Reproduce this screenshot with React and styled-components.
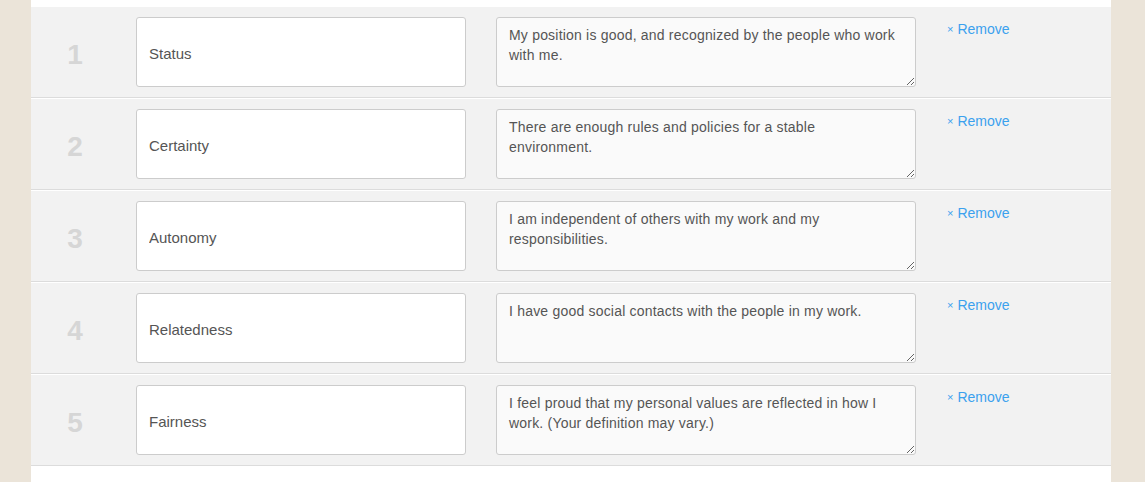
import styled, { createGlobalStyle } from "styled-components";

const GlobalStyle = createGlobalStyle`
  * {
    box-sizing: border-box;
  }
  body {
    margin: 0;
    background: #ebe4d9;
    font-family: "Liberation Sans", Arial, sans-serif;
  }
`;

const Page = styled.div`
  padding: 0 34px 0 31px;
`;

const Panel = styled.div`
  background: #ffffff;
  padding: 6px 0 17px;
`;

const Row = styled.div`
  display: flex;
  align-items: flex-start;
  padding: 10px 0;
  background: #f2f2f2;
  border-top: 1px solid #ffffff;
  border-bottom: 1px solid #dcdcdc;
`;

const Num = styled.div`
  width: 88px;
  margin-right: 17px;
  align-self: center;
  text-align: center;
  font-size: 28px;
  font-weight: bold;
  color: #d6d6d6;
  line-height: 1;
  padding-top: 5px;
`;

const Input = styled.input`
  width: 330px;
  height: 70px;
  padding: 2px 12px 0;
  border: 1px solid #cccccc;
  border-radius: 3px;
  background: #ffffff;
  font-family: inherit;
  font-size: 15px;
  color: #555555;
  outline: none;
`;

const TextArea = styled.textarea`
  width: 420px;
  height: 70px;
  margin-left: 30px;
  padding: 7px 18px 7px 12px;
  border: 1px solid #cccccc;
  border-radius: 3px;
  background: #fafafa;
  font-family: inherit;
  font-size: 14px;
  letter-spacing: 0.2px;
  line-height: 20px;
  color: #555555;
  outline: none;
  resize: vertical;
`;

const Remove = styled.a`
  margin-left: 31px;
  padding-top: 4px;
  color: #3ba1ee;
  font-size: 14px;
  text-decoration: none;
  cursor: pointer;
  display: flex;
  align-items: center;
  gap: 4px;
`;

const Times = styled.span`
  font-size: 11px;
`;

const needs = [
  ["Status", "My position is good, and recognized by the people who work with me."],
  ["Certainty", "There are enough rules and policies for a stable environment."],
  ["Autonomy", "I am independent of others with my work and my responsibilities."],
  ["Relatedness", "I have good social contacts with the people in my work."],
  ["Fairness", "I feel proud that my personal values are reflected in how I work. (Your definition may vary.)"],
];

export default function App() {
  return (
    <>
      <GlobalStyle />
      <Page>
        <Panel>
          {needs.map(([name, desc], i) => (
            <Row key={name}>
              <Num>{i + 1}</Num>
              <Input defaultValue={name} />
              <TextArea defaultValue={desc} />
              <Remove>
                <Times>×</Times>Remove
              </Remove>
            </Row>
          ))}
        </Panel>
      </Page>
    </>
  );
}
